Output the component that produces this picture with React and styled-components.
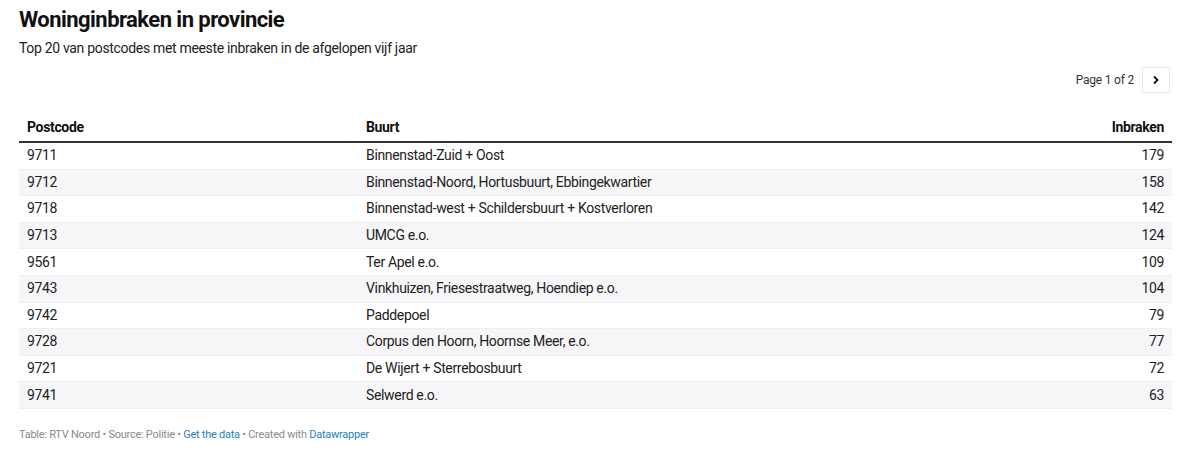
import React from "react";
import styled, { createGlobalStyle } from "styled-components";

const GlobalStyle = createGlobalStyle`
  body {
    margin: 0;
    background: #ffffff;
    font-family: Roboto, "Liberation Sans", sans-serif;
    color: #181818;
  }
`;

const Wrapper = styled.div`
  padding: 7px 28px 0 19px;
`;

const Title = styled.h1`
  margin: 0;
  font-size: 22px;
  font-weight: 700;
  line-height: 26px;
  letter-spacing: -0.55px;
  color: #111;
`;

const Subtitle = styled.p`
  margin: 6px 0 0;
  font-size: 14px;
  line-height: 18px;
  letter-spacing: -0.32px;
  color: #222;
`;

const Pager = styled.div`
  display: flex;
  justify-content: flex-end;
  align-items: center;
  gap: 8px;
  margin-top: 10px;
  font-size: 12px;
  letter-spacing: -0.2px;
  color: #333;
`;

const PageButton = styled.button`
  width: 28px;
  height: 26px;
  display: flex;
  align-items: center;
  justify-content: center;
  padding: 0;
  border: 1px solid #e6e6e6;
  border-radius: 2px;
  background: #fff;
  margin-right: 2px;
`;

const Table = styled.table`
  width: 100%;
  margin-top: 18px;
  border-collapse: collapse;
  table-layout: fixed;
  font-size: 14px;
  letter-spacing: -0.34px;
`;

const HeadCell = styled.th`
  text-align: ${(p) => (p.$right ? "right" : "left")};
  font-weight: 700;
  padding: 8px 8px 5px;
  line-height: 17px;
  border-bottom: 2px solid #333;
  color: #111;
  width: ${(p) => p.$width || "auto"};
`;

const Row = styled.tr`
  background: ${(p) => (p.$striped ? "#f6f6f8" : "#ffffff")};
  border-bottom: 1px solid #eeeeee;
`;

const Cell = styled.td`
  text-align: ${(p) => (p.$right ? "right" : "left")};
  padding: 0 8px;
  height: 25.6px;
  line-height: 17px;
  color: #222;
  white-space: nowrap;
`;

const Footer = styled.div`
  margin-top: 19px;
  font-size: 11px;
  letter-spacing: -0.25px;
  color: #8a8a8a;
`;

const Link = styled.a`
  color: #2a7fb8;
  text-decoration: none;
`;

const rows = [
  ["9711", "Binnenstad-Zuid + Oost", 179],
  ["9712", "Binnenstad-Noord, Hortusbuurt, Ebbingekwartier", 158],
  ["9718", "Binnenstad-west + Schildersbuurt + Kostverloren", 142],
  ["9713", "UMCG e.o.", 124],
  ["9561", "Ter Apel e.o.", 109],
  ["9743", "Vinkhuizen, Friesestraatweg, Hoendiep e.o.", 104],
  ["9742", "Paddepoel", 79],
  ["9728", "Corpus den Hoorn, Hoornse Meer, e.o.", 77],
  ["9721", "De Wijert + Sterrebosbuurt", 72],
  ["9741", "Selwerd e.o.", 63],
];

export default function App() {
  return (
    <>
      <GlobalStyle />
      <Wrapper>
        <Title>Woninginbraken in provincie</Title>
        <Subtitle>
          Top 20 van postcodes met meeste inbraken in de afgelopen vijf jaar
        </Subtitle>
        <Pager>
          <span>Page 1 of 2</span>
          <PageButton aria-label="Next page">
            <svg width="10" height="10" viewBox="0 0 10 10">
              <path
                d="M3 1.5 L6.5 5 L3 8.5"
                fill="none"
                stroke="#111"
                strokeWidth="1.8"
              />
            </svg>
          </PageButton>
        </Pager>
        <Table>
          <thead>
            <tr>
              <HeadCell $width="323px">Postcode</HeadCell>
              <HeadCell>Buurt</HeadCell>
              <HeadCell $right $width="184px">
                Inbraken
              </HeadCell>
            </tr>
          </thead>
          <tbody>
            {rows.map(([code, area, count], i) => (
              <Row key={code} $striped={i % 2 === 1}>
                <Cell>{code}</Cell>
                <Cell>{area}</Cell>
                <Cell $right>{count}</Cell>
              </Row>
            ))}
          </tbody>
        </Table>
        <Footer>
          Table: RTV Noord • Source: Politie • <Link href="#">Get the data</Link>{" "}
          • Created with <Link href="#">Datawrapper</Link>
        </Footer>
      </Wrapper>
    </>
  );
}
